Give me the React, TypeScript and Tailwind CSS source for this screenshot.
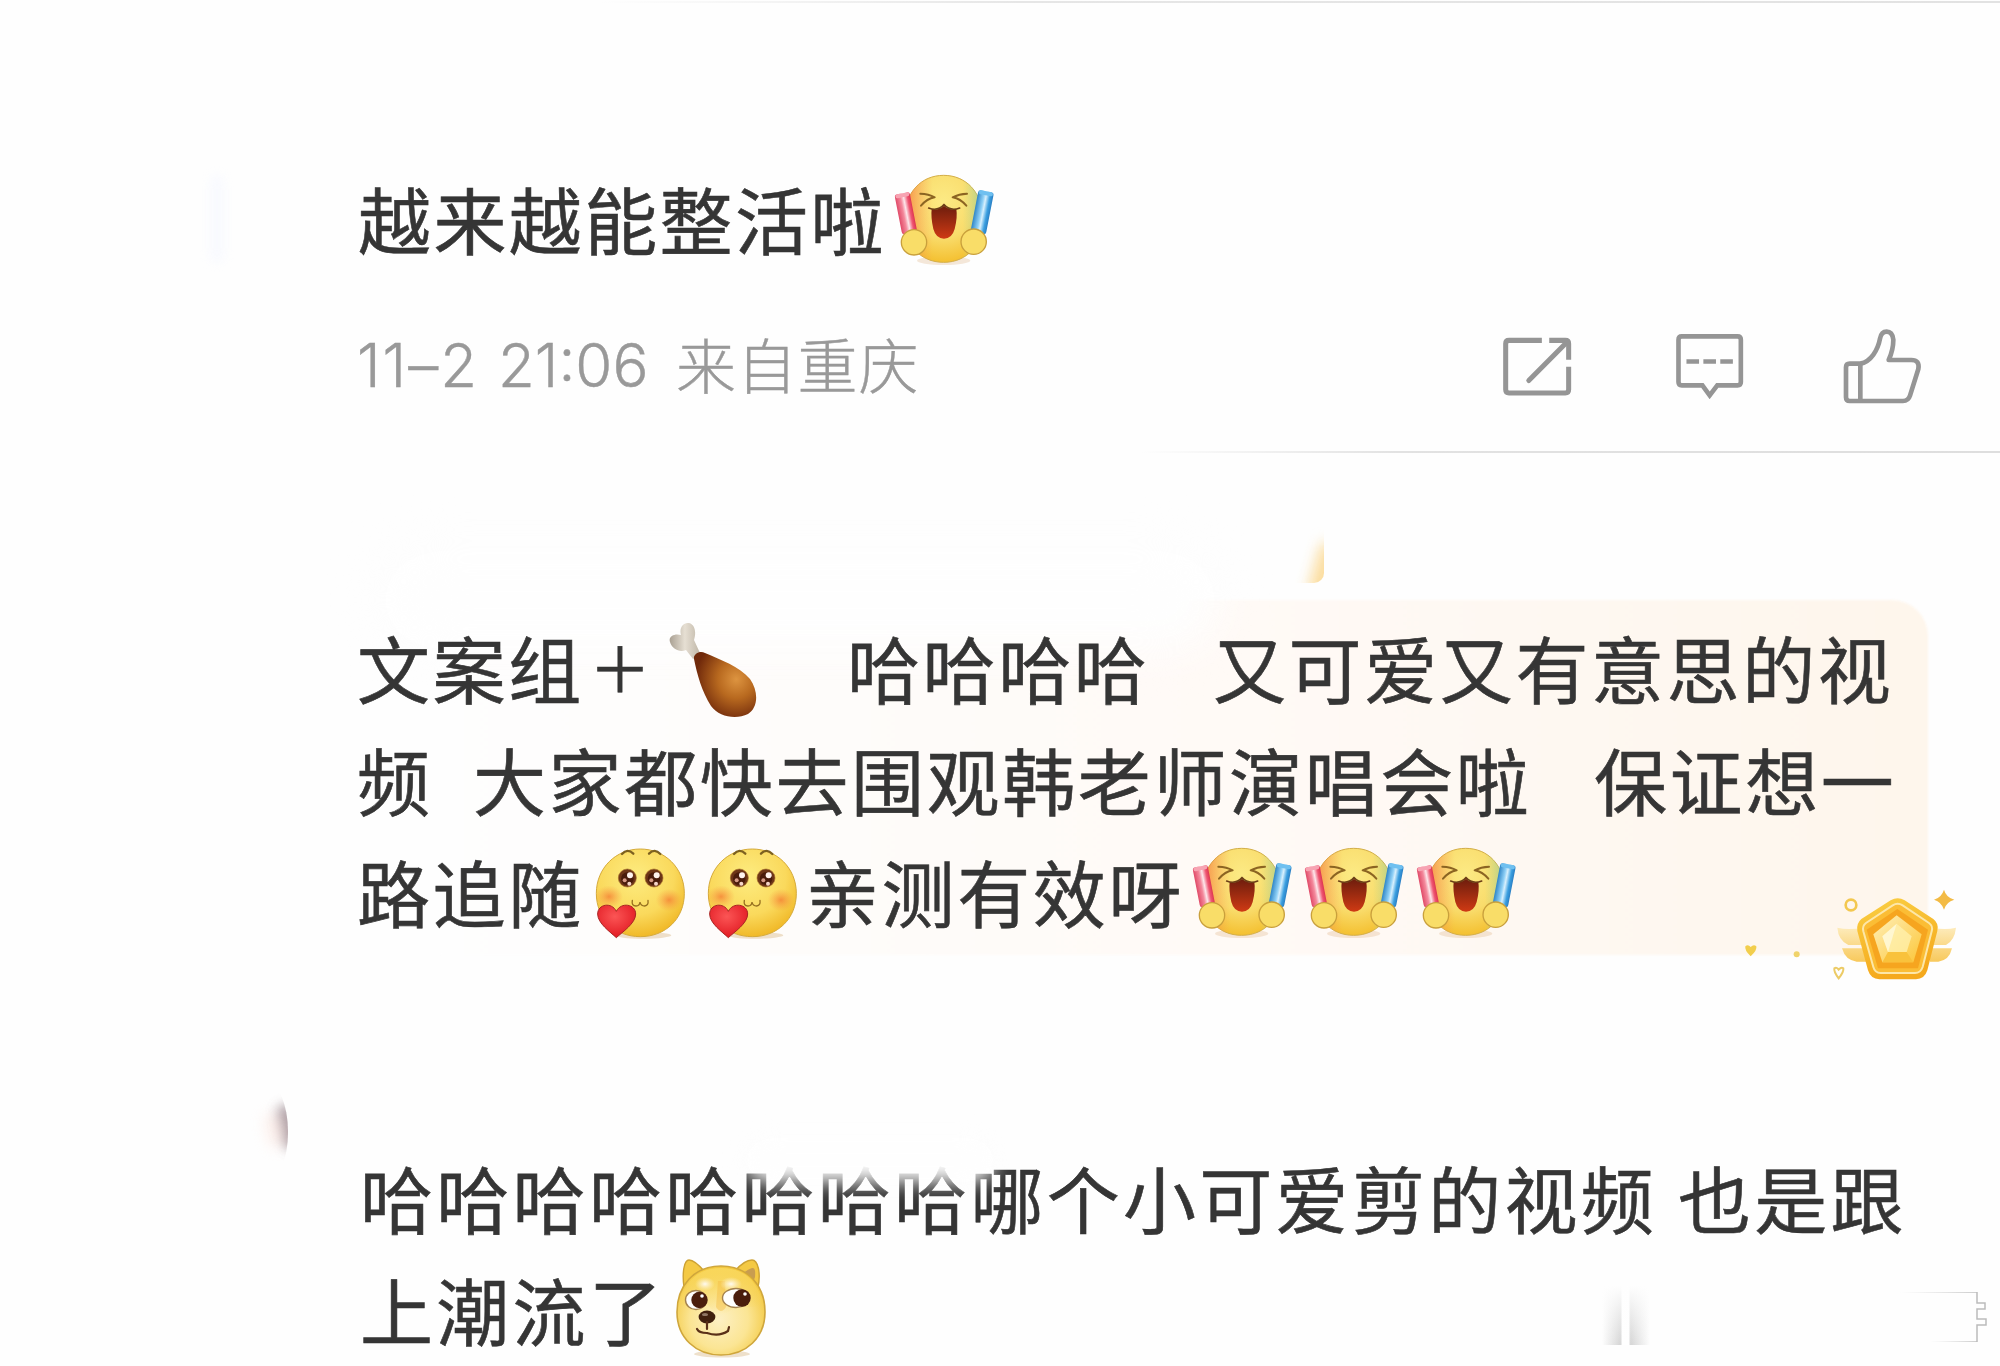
import React from 'react';

const Cheer = ({ className = '' }: { className?: string }) => (
  <svg viewBox="38 40 309 276" className={`h-[92px] w-[103px] shrink-0 ${className}`}>
    <defs>
      <radialGradient id="cheerFace" cx="0.5" cy="0.3" r="0.75">
        <stop offset="0" stopColor="#fcea84" />
        <stop offset="0.55" stopColor="#f9dc6c" />
        <stop offset="1" stopColor="#f3bb26" />
      </radialGradient>
      <linearGradient id="cheerSide" x1="0" x2="1">
        <stop offset="0" stopColor="#f5743f" stopOpacity="0.8" />
        <stop offset="0.36" stopColor="#f9a35a" stopOpacity="0" />
        <stop offset="0.74" stopColor="#bcd88a" stopOpacity="0" />
        <stop offset="1" stopColor="#8ecba0" stopOpacity="0.8" />
      </linearGradient>
      <linearGradient id="stickRed" x1="0" x2="1">
        <stop offset="0" stopColor="#e04a68" />
        <stop offset="0.35" stopColor="#f4899c" />
        <stop offset="0.55" stopColor="#fde6ea" />
        <stop offset="0.8" stopColor="#ef5672" />
        <stop offset="1" stopColor="#dd3450" />
      </linearGradient>
      <linearGradient id="stickBlue" x1="0" x2="1">
        <stop offset="0" stopColor="#2f86c8" />
        <stop offset="0.4" stopColor="#8fd0f6" />
        <stop offset="0.55" stopColor="#d8f0fd" />
        <stop offset="0.8" stopColor="#3b9fe0" />
        <stop offset="1" stopColor="#2a7fc4" />
      </linearGradient>
      <linearGradient id="cheerMouth" x1="0" x2="0" y1="0" y2="1">
        <stop offset="0" stopColor="#6d1d0d" />
        <stop offset="1" stopColor="#cf3a14" />
      </linearGradient>
    </defs>
    <ellipse cx="190" cy="300" rx="80" ry="13" fill="#d9a56a" opacity="0.25" />
    <path d="M190 44C258 44 305 96 308 170C310 250 262 305 190 305C118 305 70 250 72 170C75 96 122 44 190 44Z" fill="url(#cheerFace)" stroke="#d3ae48" strokeWidth="3" />
    <path d="M190 44C258 44 305 96 308 170C310 250 262 305 190 305C118 305 70 250 72 170C75 96 122 44 190 44Z" fill="url(#cheerSide)" />
    <g fill="none" stroke="#8b6422" strokeWidth="6" strokeLinecap="round" strokeLinejoin="round">
      <path d="M120 99Q145 100 163 110Q140 114 122 135" />
      <path d="M260 99Q236 100 217 110Q240 114 258 135" />
    </g>
    <path d="M154 145Q174 150 191 135Q209 150 228 145Q232 170 223 205Q215 234 191 234Q167 234 159 205Q151 170 154 145Z" fill="url(#cheerMouth)" />
    <path d="M145 142Q172 153 191 132Q211 153 238 142" fill="none" stroke="#6b3d16" strokeWidth="5" strokeLinecap="round" />
    <g transform="rotate(-11 76 155)">
      <rect x="53" y="97" width="46" height="122" rx="8" fill="url(#stickRed)" />
      <rect x="55" y="97" width="42" height="12" rx="6" fill="#f7a3b2" />
    </g>
    <g transform="rotate(11 306 155)">
      <rect x="282" y="91" width="47" height="128" rx="8" fill="url(#stickBlue)" />
      <rect x="284" y="91" width="43" height="12" rx="6" fill="#6fc0f0" />
    </g>
    <circle cx="101" cy="245" r="38" fill="#f9dd68" stroke="#c9a03c" strokeWidth="4" />
    <circle cx="280" cy="243" r="38" fill="#f9dd68" stroke="#c9a03c" strokeWidth="4" />
  </svg>
);

const Kiss = ({ className = '' }: { className?: string }) => (
  <svg viewBox="46 22 273 273" className={`h-[91px] w-[91px] shrink-0 ${className}`}>
    <defs>
      <radialGradient id="kissFace" cx="0.45" cy="0.32" r="0.72">
        <stop offset="0" stopColor="#fdec80" />
        <stop offset="0.6" stopColor="#fad95c" />
        <stop offset="1" stopColor="#efb420" />
      </radialGradient>
      <radialGradient id="kissBlush">
        <stop offset="0" stopColor="#f4732f" stopOpacity="0.7" />
        <stop offset="1" stopColor="#f7923f" stopOpacity="0" />
      </radialGradient>
      <radialGradient id="kissHeart" cx="0.45" cy="0.35" r="0.7">
        <stop offset="0" stopColor="#fb5555" />
        <stop offset="1" stopColor="#e0161f" />
      </radialGradient>
    </defs>
    <ellipse cx="190" cy="284" rx="85" ry="10" fill="#c99a55" opacity="0.3" />
    <path d="M182 25C255 25 314 82 314 158C314 234 258 288 182 288C106 288 50 234 50 158C50 82 109 25 182 25Z" fill="url(#kissFace)" stroke="#d5aa3a" strokeWidth="3" />
    <ellipse cx="88" cy="168" rx="42" ry="34" fill="url(#kissBlush)" />
    <ellipse cx="268" cy="178" rx="40" ry="34" fill="url(#kissBlush)" />
    <g fill="none" stroke="#7d6120" strokeWidth="7" strokeLinecap="round">
      <path d="M127 40Q143 22 161 39" />
      <path d="M208 39Q225 22 242 40" />
    </g>
    {[143, 223].map((x) => (
      <g key={x}>
        <circle cx={x} cy="112" r="27" fill="#6d3517" stroke="#a8702c" strokeWidth="2" />
        <circle cx={x} cy="114" r="19" fill="#4a1c0c" />
        <circle cx={x + 8} cy="104" r="9" fill="#fff3ee" />
        <circle cx={x - 8} cy="119" r="6" fill="#d79b86" />
        <circle cx={x + 6} cy="129" r="6" fill="#f5d5c8" />
      </g>
    ))}
    <path d="M158 179Q155 196 169 196Q180 196 181 184Q183 196 195 196Q207 195 205 179" fill="none" stroke="#96701f" strokeWidth="4" strokeLinecap="round" />
    <path d="M110 291C92 274 54 248 54 220C54 190 96 183 110 212C124 183 168 190 168 220C168 248 128 274 110 291Z" fill="url(#kissHeart)" stroke="#a82522" strokeWidth="3" />
  </svg>
);

const Doge = ({ className = '' }: { className?: string }) => (
  <svg viewBox="0 0 92 99" className={`h-[99px] w-[92px] shrink-0 ${className}`}>
    <defs>
      <radialGradient id="dogeFace" cx="0.48" cy="0.6" r="0.6">
        <stop offset="0" stopColor="#fdf0c4" />
        <stop offset="0.55" stopColor="#fbe594" />
        <stop offset="1" stopColor="#f2c63a" />
      </radialGradient>
      <linearGradient id="dogeTop" x1="0" x2="0" y1="0" y2="1">
        <stop offset="0" stopColor="#f9d75c" />
        <stop offset="1" stopColor="#f9d75c" stopOpacity="0" />
      </linearGradient>
      <radialGradient id="dogeBrow">
        <stop offset="0" stopColor="#fffaf0" />
        <stop offset="1" stopColor="#fff4d0" stopOpacity="0" />
      </radialGradient>
    </defs>
    <ellipse cx="46" cy="95" rx="28" ry="3.5" fill="#c99a55" opacity="0.3" />
    <path d="M8 28C6 14 8 1 13 1C18 1 23 6 29 13ZM82 28C85 14 82 1 76 1C71 1 65 5 59 12Z" fill="#f4c944" stroke="#cda233" strokeWidth="1.4" />
    <path d="M79 18Q80 8 76 9Q70 11 67 15L77 24Z" fill="#c89d50" />
    <path d="M45 7C72 7 89 27 89 53C89 79 70 96 45 96C20 96 1 79 1 53C1 27 18 7 45 7Z" fill="url(#dogeFace)" stroke="#cfa63c" strokeWidth="1.6" />
    <path d="M45 9C66 9 80 20 85 40Q88 52 60 46Q45 64 32 46Q2 52 5 40C11 20 24 9 45 9Z" fill="url(#dogeTop)" />
    <path d="M42 22L49 22L50 48Q45 56 40 48Z" fill="#f4bd45" opacity="0.45" />
    <ellipse cx="29" cy="25" rx="10" ry="7" fill="url(#dogeBrow)" />
    <ellipse cx="55" cy="25" rx="11" ry="7" fill="url(#dogeBrow)" />
    <ellipse cx="20" cy="41" rx="10.5" ry="9.5" fill="#fff" stroke="#a5834f" strokeWidth="1.4" />
    <ellipse cx="60" cy="39" rx="13.5" ry="9.5" fill="#fff" stroke="#a5834f" strokeWidth="1.4" />
    <circle cx="23.5" cy="41" r="8.2" fill="#4b1e0d" />
    <circle cx="66" cy="39" r="8.7" fill="#4b1e0d" />
    <circle cx="26" cy="37" r="1.8" fill="#fff" /><circle cx="69" cy="35" r="1.8" fill="#fff" />
    <ellipse cx="31" cy="58" rx="8.4" ry="6.5" fill="#40200f" />
    <ellipse cx="29" cy="55.5" rx="3" ry="1.6" fill="#8f7665" />
    <path d="M31 63V70M21 70Q23 74 31 74Q43 78 52 72L53 68" fill="none" stroke="#5a3018" strokeWidth="2.2" strokeLinecap="round" />
  </svg>
);

const Drumstick = ({ className = '' }: { className?: string }) => (
  <svg viewBox="0 0 90 96" className={`h-[96px] w-[90px] shrink-0 ${className}`}>
    <defs>
      <radialGradient id="meat" cx="0.68" cy="0.42" r="0.65">
        <stop offset="0" stopColor="#dd9440" />
        <stop offset="0.45" stopColor="#b8691f" />
        <stop offset="1" stopColor="#70290b" />
      </radialGradient>
      <linearGradient id="bone" x1="0" x2="1">
        <stop offset="0" stopColor="#aaa193" />
        <stop offset="0.5" stopColor="#e6dfd3" />
        <stop offset="1" stopColor="#c0b7a8" />
      </linearGradient>
    </defs>
    <path d="M24 37L17 28C11 31 3 27 1 20C-1 14 6 11 12 13C10 6 14 0 20 1C27 3 27 12 25 18L31 31Z" fill="url(#bone)" />
    <path d="M25 37C24 32 31 28 36 31C52 38 70 44 81 57C90 70 89 86 79 92C67 98 50 95 42 84C33 70 28 52 25 37Z" fill="url(#meat)" />
  </svg>
);

const ShareIcon = () => (
  <svg viewBox="70 78 206 176" className="h-[59px] w-[69px] shrink-0" fill="none" stroke="#959595" strokeWidth="15">
    <path d="M186 88H88Q78 88 78 98V235Q78 245 88 245H256Q266 245 266 235V167" />
    <path d="M208 88H256Q266 88 266 98V146" />
    <path d="M262 92L147 208" strokeLinecap="round" />
  </svg>
);

const CommentIcon = () => (
  <svg viewBox="590 75 204 196" className="h-[65px] w-[68px] shrink-0" fill="none" stroke="#959595" strokeWidth="14">
    <path d="M607 82H775Q785 82 785 92V220Q785 230 775 230H714L691 260L669 230H607Q597 230 597 220V92Q597 82 607 82Z" />
    <path d="M621 158H659M672 158H710M723 158H761" />
  </svg>
);

const LikeIcon = () => (
  <svg viewBox="1090 50 237 225" className="h-[75px] w-[79px] shrink-0" fill="none" stroke="#959595" strokeWidth="14" strokeLinejoin="round">
    <path d="M1142 154H1110Q1099 154 1099 165V255Q1099 266 1110 266H1270Q1286 266 1291 250L1316 170Q1321 143 1295 143H1227Q1241 112 1241 82Q1238 58 1221 58Q1205 58 1201 79C1195 112 1174 148 1142 154Z" />
    <path d="M1142 154V266" />
  </svg>
);

const Badge = () => (
  <svg viewBox="60 80 660 285" className="absolute top-[287px] left-[1740px] h-[95px] w-[220px]">
    <defs>
      <linearGradient id="wing" x1="0" x2="0" y1="0" y2="1">
        <stop offset="0" stopColor="#fdebbb" />
        <stop offset="1" stopColor="#f8c95c" />
      </linearGradient>
      <linearGradient id="gold" x1="0" x2="0.3" y1="0" y2="1">
        <stop offset="0" stopColor="#fad044" />
        <stop offset="1" stopColor="#f5a91d" />
      </linearGradient>
      <linearGradient id="gem" x1="0" x2="1" y1="0" y2="1">
        <stop offset="0" stopColor="#fff0ba" />
        <stop offset="1" stopColor="#fcc638" />
      </linearGradient>
    </defs>
    <path d="M352 202Q385 210 430 202V254H385Q355 240 352 202ZM366 264H440V304H410Q376 300 366 264Z" fill="url(#wing)" />
    <path d="M708 202Q675 210 640 202V254H678Q704 240 708 202ZM696 264H630V304H655Q688 300 696 264Z" fill="url(#wing)" />
    <path d="M512 120Q533 108 554 120L640 176Q658 190 652 212L622 330Q614 356 588 357H478Q452 356 444 330L412 212Q408 190 424 176Z" fill="url(#gold)" />
    <path d="M518 135Q533 126 548 135L627 188Q640 197 635 213L608 320Q602 338 585 338H482Q465 338 460 320L430 213Q426 197 438 188Z" fill="#fbbd35" stroke="#fde7a8" strokeWidth="6" />
    <path d="M532 146L624 208L594 324H474L440 208Z" fill="#f6a51f" />
    <path d="M530 165L605 222L580 306H487L460 222Z" fill="url(#gem)" />
    <path d="M530 190L575 228L560 275H504L487 228Z" fill="#fff2b0" opacity="0.75" />
    <path d="M504 275H560L580 306H487Z" fill="#f9c23c" />
    <path d="M530 190L504 275L487 228Z" fill="#fffbe4" opacity="0.7" />
    <circle cx="393" cy="134" r="16" fill="none" stroke="#f3c850" strokeWidth="8" />
    <path d="M672 88Q678 111 703 118Q678 125 672 148Q665 125 642 118Q665 111 672 88Z" fill="#f3bb45" />
    <path d="M76 258Q84 251 92 260Q101 251 109 258Q112 270 92 288Q73 270 76 258Z" fill="#f2ce4c" />
    <circle cx="230" cy="282" r="9" fill="#f0d36a" />
    <path d="M343 324Q350 319 356 328Q364 319 370 324Q372 334 356 354Q341 334 343 324Z" fill="none" stroke="#eccb66" strokeWidth="6" />
  </svg>
);

const Row = ({ children, className = '' }: { children: React.ReactNode; className?: string }) => (
  <div className={`flex h-[112px] items-center whitespace-pre text-[73px] leading-[112px] [-webkit-text-stroke:0.6px_#353535] ${className}`}>{children}</div>
);

export default function App() {
  return (
    <main className="relative h-[1366px] w-[2000px] overflow-hidden bg-[#fefefe] text-[#353535]" style={{ fontFamily: '"Noto Sans CJK SC", sans-serif' }}>
      <section className="relative h-[453px] pt-[161px]">
        <div className="absolute top-px right-0 h-[2px] w-[1400px] bg-linear-to-r from-transparent via-[#e6e6e6] via-30% to-[#e2e2e2]" />
        <div className="absolute top-[175px] left-[209px] h-[88px] w-[16px] rounded-full bg-[#f6f8ff] opacity-60 blur-[5px]" />
        <Row className="pl-[358px] tracking-[2.4px]">
          <span className="w-[535px]">越来越能整活啦</span>
          <Cheer className="mt-[6px]" />
        </Row>
        <div className="mt-[47px] flex h-[90px] items-center pr-[78px] pl-[357px] font-light text-[#999999] [-webkit-text-stroke:0.4px_#999999]">
          <span className="w-[141px] text-[60px] tracking-[2px]" style={{ fontFamily: 'Inter, sans-serif' }}>11–2</span>
          <span className="w-[178px] text-[60px]" style={{ fontFamily: 'Inter, sans-serif' }}>21:06</span>
          <span className="-mt-[5px] text-[60px] tracking-[0.8px] whitespace-nowrap">来自重庆</span>
          <div className="mt-[2px] ml-auto flex items-center">
            <div className="w-[173px]"><ShareIcon /></div>
            <div className="w-[167px]"><CommentIcon /></div>
            <LikeIcon />
          </div>
        </div>
        <div className="absolute right-0 bottom-0 h-[2px] w-[860px] bg-linear-to-r from-transparent via-[#e2e2e2] via-30% to-[#dedede]" />
      </section>

      <section className="relative mt-[147px] h-[355px] pt-[10px]">
        <div className="absolute top-[-80px] left-[1270px] h-[63px] w-[54px] overflow-hidden rounded-br-[10px]">
          <div className="absolute right-[-16px] bottom-[-14px] h-[52px] w-[26px] rotate-[16deg] bg-[#fbdc9c] blur-[7px]" />
        </div>
        <div className="absolute top-0 left-[440px] h-[355px] w-[1488px] rounded-tr-[36px] bg-linear-to-r from-[#fefefe] via-[#fffaf6] via-55% to-[#fef6ec] blur-[1px]" />
        <div className="absolute top-[-50px] left-[380px] h-[100px] w-[840px] rounded-full bg-[#fefefe] blur-[24px]" />
        <Badge />
        <div className="relative tracking-[2.6px]">
          <Row className="pl-[357px]">
            <span className="w-[226px]">文案组</span>
            <span className="w-[86px] pl-[6px] text-[62px]">＋</span>
            <Drumstick className="mt-[8px]" />
            <span className="ml-[88px] w-[366px]">哈哈哈哈</span>
            <span>又可爱又有意思的视</span>
          </Row>
          <Row className="pl-[357px]">
            <span className="w-[116px]">频</span>
            <span className="w-[1121px]">大家都快去围观韩老师演唱会啦</span>
            <span>保证想一</span>
          </Row>
          <Row className="pl-[357px]">
            <span className="w-[238px]">路追随</span>
            <Kiss className="mt-[6px] mr-[21px]" />
            <Kiss className="mt-[6px] mr-[8px]" />
            <span className="w-[385px]">亲测有效呀</span>
            <Cheer className="mt-[6px] mr-[9px]" />
            <Cheer className="mt-[6px] mr-[9px]" />
            <Cheer className="mt-[6px]" />
          </Row>
        </div>
      </section>

      <section className="relative mt-[185px] h-[224px] tracking-[3.3px]">
        <div className="absolute top-[-58px] left-[245px] h-[100px] w-[43px] overflow-hidden rounded-r-[50%]">
          <div className="absolute top-[22px] right-[-10px] h-[46px] w-[18px] -rotate-12 rounded-full bg-[#98868e] opacity-80 blur-[6px]" />
          <div className="absolute top-[30px] right-[4px] h-[36px] w-[18px] -rotate-12 rounded-full bg-[#fbdcd2] opacity-40 blur-[7px]" />
        </div>
        <Row className="pl-[360px]">
          <span className="w-[1318px]">哈哈哈哈哈哈哈哈哪个小可爱剪的视频</span>
          <span>也是跟</span>
        </Row>
        <div className="absolute top-[-2px] left-[745px] h-[44px] w-[250px] rounded-full bg-[#fefefe] blur-[10px]" />
        <Row className="pl-[360px]">
          <span className="w-[316px]">上潮流了</span>
          <Doge className="mt-px" />
        </Row>
        <svg viewBox="0 0 420 106" className="absolute top-[120px] left-[1580px] h-[106px] w-[420px]" fill="none">
          <defs>
            <linearGradient id="smudge" x1="0" x2="1">
              <stop offset="0" stopColor="#bbb" stopOpacity="0" />
              <stop offset="0.38" stopColor="#bbb" stopOpacity="0.6" />
              <stop offset="0.42" stopColor="#fff" />
              <stop offset="0.56" stopColor="#fff" />
              <stop offset="0.6" stopColor="#bbb" stopOpacity="0.6" />
              <stop offset="1" stopColor="#bbb" stopOpacity="0" />
            </linearGradient>
            <linearGradient id="smudgeFade" x1="0" x2="0" y1="0" y2="1">
              <stop offset="0" stopColor="#fefefe" />
              <stop offset="1" stopColor="#fefefe" stopOpacity="0" />
            </linearGradient>
            <linearGradient id="edge" x1="0" x2="1">
              <stop offset="0" stopColor="#ddd" stopOpacity="0" />
              <stop offset="1" stopColor="#ccc" />
            </linearGradient>
          </defs>
          <rect x="22" y="26" width="48" height="59" fill="url(#smudge)" />
          <rect x="22" y="26" width="48" height="59" fill="url(#smudgeFade)" />
          <rect x="320" y="32" width="77" height="1" fill="url(#edge)" />
          <rect x="350" y="81" width="47" height="1" fill="url(#edge)" />
          <path d="M397 32V43H405V49H397V59H406V65H397V82" stroke="#bcbcbc" strokeWidth="1.5" />
        </svg>
      </section>
    </main>
  );
}
